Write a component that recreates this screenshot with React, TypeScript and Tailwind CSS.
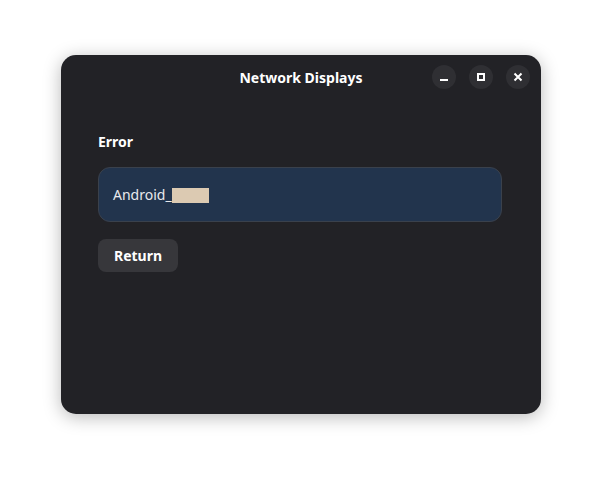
export default function App() {
  return (
    <div
      className="w-[602px] h-[482px] bg-white pt-[55px] pl-[61px]"
      style={{ fontFamily: '"Noto Sans", "Open Sans", sans-serif' }}
    >
      <div className="w-[480px] h-[359px] rounded-[15px] bg-[#222226] shadow-[0_3px_18px_rgba(0,0,0,0.28)] flex flex-col text-white">
        <div className="relative h-[44px] flex items-center justify-center">
          <p className="text-[14px] font-bold leading-none mt-[1px]">Network Displays</p>
          <div className="absolute right-[11px] top-[10px] flex gap-[13px]">
            <button className="w-6 h-6 rounded-full bg-[#2f2f33] flex items-center justify-center">
              <svg width="10" height="10" viewBox="0 0 10 10">
                <rect x="1" y="7" width="8" height="2" fill="white" />
              </svg>
            </button>
            <button className="w-6 h-6 rounded-full bg-[#2f2f33] flex items-center justify-center">
              <svg width="10" height="10" viewBox="0 0 10 10">
                <rect x="2" y="2" width="6" height="6" fill="none" stroke="white" strokeWidth="2" />
              </svg>
            </button>
            <button className="w-6 h-6 rounded-full bg-[#2f2f33] flex items-center justify-center">
              <svg width="10" height="10" viewBox="0 0 10 10">
                <path d="M1.5 1.5 L8.5 8.5 M8.5 1.5 L1.5 8.5" stroke="white" strokeWidth="2" />
              </svg>
            </button>
          </div>
        </div>

        <div className="pl-[37px] pt-[33px] flex flex-col">
          <p className="text-[14px] font-bold leading-[20px]">Error</p>
          <div className="mt-[15px] w-[404px] h-[55px] rounded-[12px] bg-[#22344d] border border-[#3a414c] flex items-center pl-[14px]">
            <span className="text-[14px] text-[#e9e9ec]">Android_</span>
            <span className="w-[37px] h-[15px] bg-[#dccab2] mt-[1px]" />
          </div>
          <button className="mt-[17px] w-[80px] h-[33px] rounded-[8px] bg-[#37373b] text-[14px] font-bold flex items-center justify-center">
            Return
          </button>
        </div>
      </div>
    </div>
  );
}
